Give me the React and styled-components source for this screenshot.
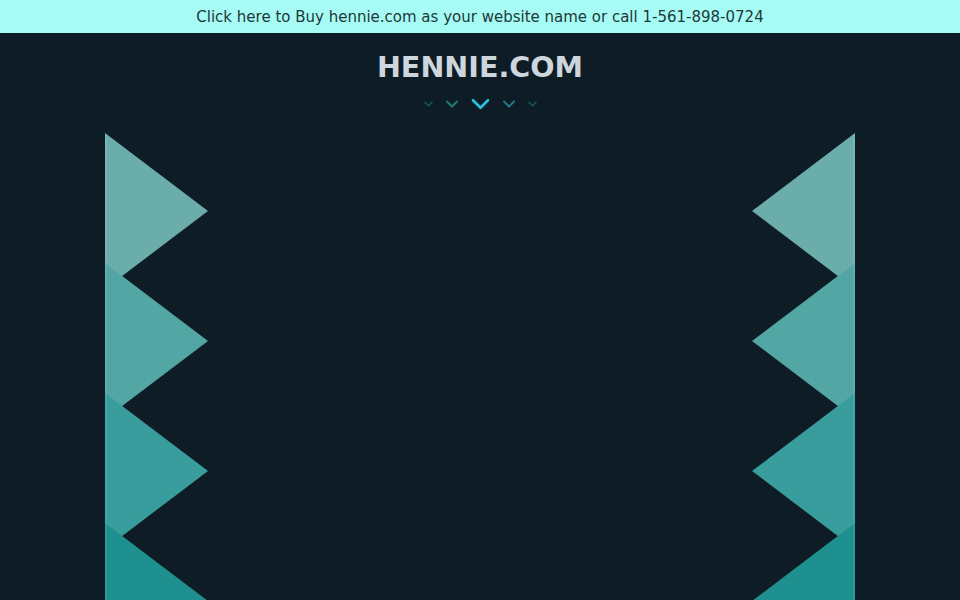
import React from "react";
import styled, { createGlobalStyle } from "styled-components";

const Global = createGlobalStyle`
  html, body { margin: 0; padding: 0; background: #0e1c26; }
  body { font-family: "DejaVu Sans", "Liberation Sans", sans-serif; overflow: hidden; }
`;

const Page = styled.div`
  width: 960px;
  height: 600px;
  display: flex;
  flex-direction: column;
  background: #0e1c26;
  overflow: hidden;
`;

const TopBar = styled.a`
  height: 33px;
  flex: none;
  display: flex;
  align-items: center;
  justify-content: center;
  background: #a6fcf5;
  color: #1e3838;
  font-size: 15px;
  text-decoration: none;
`;

const Header = styled.header`
  display: flex;
  flex-direction: column;
  align-items: center;
  padding-top: 17px;
`;

const Title = styled.h1`
  margin: 0;
  font-family: "DejaVu Sans", sans-serif;
  font-weight: bold;
  font-size: 28.6px;
  line-height: 34px;
  color: #cdd6dc;
`;

const Chevrons = styled.div`
  display: flex;
  align-items: center;
  gap: 9px;
  margin-top: 14px;
  height: 12px;
`;

const ChevronSvg = styled.svg`
  flex: none;
  margin: 0 ${(p) => p.$space}px;
`;

const Chevron = ({ w, color, sw, space = 0 }) => (
  <ChevronSvg $space={space} width={w + 6} height={12} viewBox={`0 0 ${w + 6} 12`}>
    <polyline
      points={`3,${6 - w / 4} ${(w + 6) / 2},${6 + w / 4} ${w + 3},${6 - w / 4}`}
      fill="none"
      stroke={color}
      strokeWidth={sw}
      strokeLinecap="round"
      strokeLinejoin="round"
    />
  </ChevronSvg>
);

const Stage = styled.main`
  flex: 1;
  display: flex;
  justify-content: space-between;
  padding: 23px 105px 0;
`;

const Column = styled.div`
  width: 103px;
  display: flex;
  flex-direction: column;
`;

const Tri = styled.div`
  width: 103px;
  height: 156px;
  flex: none;
  & + & { margin-top: -26px; }
  background: ${(p) =>
    p.$side === "left"
      ? `linear-gradient(to right, ${p.$edge} 0 2px, ${p.$color} 2px)`
      : `linear-gradient(to left, ${p.$edge} 0 2px, ${p.$color} 2px)`};
  clip-path: ${(p) =>
    p.$side === "left"
      ? "polygon(0 0, 100% 50%, 0 100%)"
      : "polygon(100% 0, 0 50%, 100% 100%)"};
`;

const shades = [
  { color: "#6badaa", edge: "#74b4b1" },
  { color: "#52a7a5", edge: "#5cafad" },
  { color: "#389d9c", edge: "#43a5a4" },
  { color: "#1f9090", edge: "#2b9898" },
];

const TriColumn = ({ side }) => (
  <Column>
    {shades.map((s, i) => (
      <Tri key={i} $side={side} $color={s.color} $edge={s.edge} />
    ))}
  </Column>
);

export default function App() {
  return (
    <Page>
      <Global />
      <TopBar href="#">
        Click here to Buy hennie.com as your website name or call 1-561-898-0724
      </TopBar>
      <Header>
        <Title>HENNIE.COM</Title>
        <Chevrons>
          <Chevron w={7} color="#1b5456" sw={1.6} />
          <Chevron w={10} color="#2a777c" sw={2} />
          <Chevron w={15} color="#27c1dc" sw={2.6} space={1} />
          <Chevron w={10} color="#2b7389" sw={2} />
          <Chevron w={7} color="#1b5456" sw={1.6} />
        </Chevrons>
      </Header>
      <Stage>
        <TriColumn side="left" />
        <TriColumn side="right" />
      </Stage>
    </Page>
  );
}
